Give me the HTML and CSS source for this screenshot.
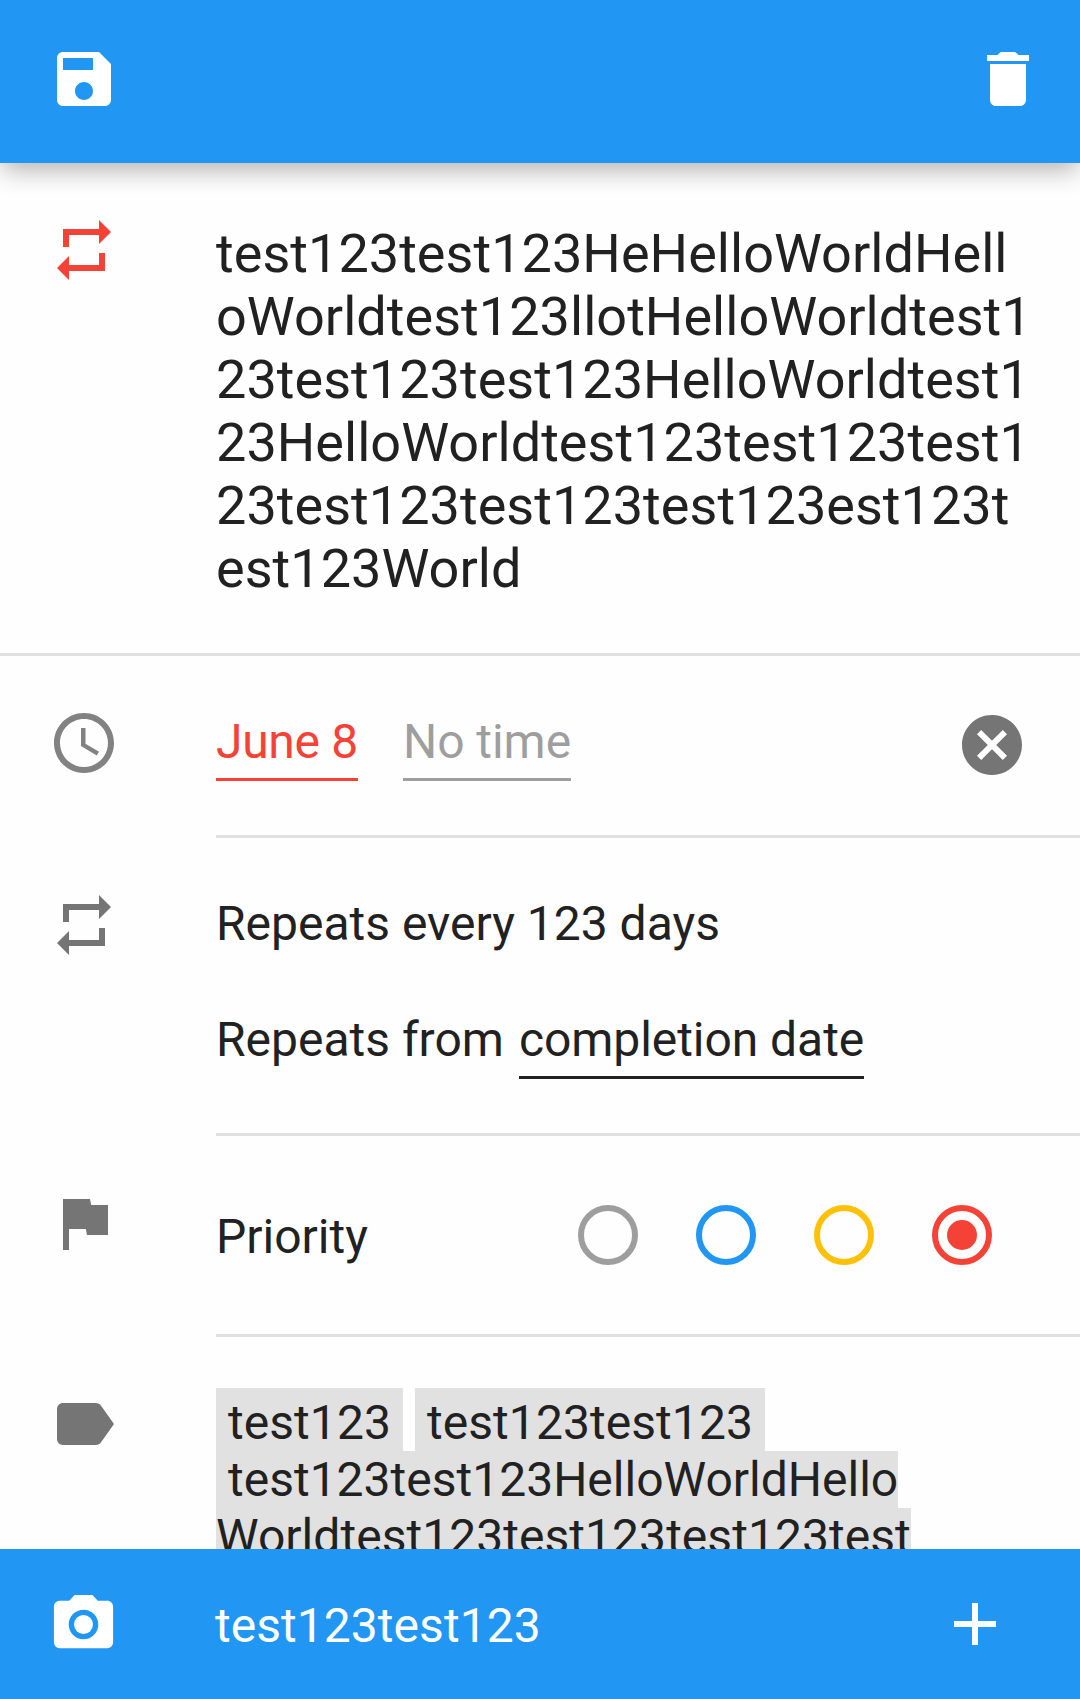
FILE: index.html
```html
<!DOCTYPE html>
<html lang="en">
<head>
<meta charset="utf-8">
<title>Edit task</title>
<link rel="stylesheet" href="styles.css">
</head>
<body>
<div class="screen">
  <header class="toolbar">
    <svg class="icon" viewBox="0 0 24 24"><path d="M17 3H5c-1.11 0-2 .9-2 2v14c0 1.1.89 2 2 2h14c1.1 0 2-.9 2-2V7l-4-4zm-5 16c-1.66 0-3-1.34-3-3s1.34-3 3-3 3 1.34 3 3-1.34 3-3 3zm3-10H5V5h10v4z"/></svg>
    <svg class="icon" viewBox="0 0 24 24"><path d="M6 19c0 1.100.9 2 2 2h8c1.100 0 2-.9 2-2V7H6v12zM19 4h-3.500l-.4-.45c-.4-.4-.8-.55-1.200-.55h-3.800c-.4 0-.8.15-1.200.55L8.500 4H5v2h14V4z"/></svg>
  </header>

  <main class="content">
    <section class="row row-title">
      <svg class="icon icon-repeat red" viewBox="0 0 24 24"><path d="M7 7h10v3l4-4-4-4v3H5v6h2V7zm10 10H7v-3l-4 4 4 4v-3h12v-6h-2v4z"/></svg>
      <h1 class="title">test123test123HeHelloWorldHell<br>oWorldtest123llotHelloWorldtest1<br>23test123test123HelloWorldtest1<br>23HelloWorldtest123test123test1<br>23test123test123test123est123t<br>est123World</h1>
    </section>

    <section class="row row-date">
      <svg class="icon icon-clock" viewBox="0 0 24 24"><path d="M11.990 2C6.470 2 2 6.480 2 12s4.470 10 9.990 10C17.520 22 22 17.520 22 12S17.520 2 11.990 2zM12 20c-4.420 0-8-3.580-8-8s3.580-8 8-8 8 3.580 8 8-3.580 8-8 8zM12.500 7H11v6l5.250 3.150.75-1.230-4.500-2.670z"/></svg>
      <div class="body date-body">
        <span class="field red">June 8</span>
        <span class="field muted">No time</span>
        <svg class="icon clear" viewBox="0 0 24 24"><path d="M12 2C6.470 2 2 6.470 2 12s4.470 10 10 10 10-4.470 10-10S17.530 2 12 2zm5 13.590L15.590 17 12 13.410 8.410 17 7 15.590 10.590 12 7 8.410 8.410 7 12 10.590 15.590 7 17 8.410 13.410 12 17 15.590z"/></svg>
      </div>
    </section>

    <section class="row row-repeat">
      <svg class="icon" viewBox="0 0 24 24"><path d="M7 7h10v3l4-4-4-4v3H5v6h2V7zm10 10H7v-3l-4 4 4 4v-3h12v-6h-2v4z"/></svg>
      <div class="body repeat-body">
        <div>Repeats every 123 days</div>
        <div class="repeat-from"><span>Repeats from</span><span class="field">completion date</span></div>
      </div>
    </section>

    <section class="row row-priority">
      <svg class="icon" viewBox="0 0 24 24"><path d="M14.400 6L14 4H5v17h2v-7h5.600l.4 2h7V6z"/></svg>
      <div class="body priority-body">
        <span class="priority-label">Priority</span>
        <div class="radios">
          <span class="radio none"></span>
          <span class="radio low"></span>
          <span class="radio medium"></span>
          <span class="radio high selected"></span>
        </div>
      </div>
    </section>

    <section class="row row-tags">
      <svg class="icon" viewBox="0 0 24 24"><path d="M17.630 5.840C17.270 5.330 16.670 5 16 5L5 5.010C3.900 5.010 3 5.900 3 7v10c0 1.100.9 1.990 2 1.990L16 19c.67 0 1.270-.33 1.630-.84L22 12l-4.370-6.160z"/></svg>
      <div class="tags">
        <div class="tag-line"><span class="tag tag-first">test123</span><span class="tag tag-first">test123test123</span></div>
        <div class="tag-line"><span class="tag tag-open">test123test123HelloWorldHello</span></div>
        <div class="tag-line"><span class="tag tag-cont">Worldtest123test123test123test</span></div>
      </div>
    </section>
  </main>

  <footer class="comment-bar">
    <svg class="icon icon-camera" viewBox="0 0 24 24"><circle cx="12" cy="12" r="3.200"/><path d="M9 2L7.170 4H4c-1.100 0-2 .9-2 2v12c0 1.100.9 2 2 2h16c1.100 0 2-.9 2-2V6c0-1.100-.9-2-2-2h-3.170L15 2H9zm3 15c-2.760 0-5-2.240-5-5s2.240-5 5-5 5 2.240 5 5-2.240 5-5 5z"/></svg>
    <span class="comment">test123test123</span>
    <svg class="icon" viewBox="0 0 24 24"><path d="M19 13h-6v6h-2v-6H5v-2h6V5h2v6h6v2z"/></svg>
  </footer>
</div>
</body>
</html>
```

FILE: styles.css
```css
* {
  box-sizing: border-box;
}

body {
  margin: 0;
  background: #fefefe;
  color: #212121;
  font: 48px/57px Roboto, "Liberation Sans", sans-serif;
}

.screen {
  display: flex;
  flex-direction: column;
  width: 1080px;
  height: 1699px;
  overflow: hidden;
}

.icon {
  display: block;
  flex: none;
  width: 72px;
  height: 72px;
  fill: #757575;
}

.toolbar {
  display: flex;
  justify-content: space-between;
  flex: none;
  height: 163px;
  padding: 43px 36px 0 48px;
  background: #2196f3;
  box-shadow: 0 9px 24px -2px rgba(0, 0, 0, 0.3);
}

.toolbar .icon,
.comment-bar .icon {
  fill: #fff;
}

.content {
  flex: 1;
  min-height: 0;
  overflow: hidden;
  /* lets the toolbar shadow fall over the list */
  position: relative;
  z-index: -1;
}

.row {
  display: grid;
  grid-template-columns: 168px 1fr;
  align-items: start;
  padding-left: 48px;
}

.body {
  height: 100%;
  border-bottom: 3px solid #e0e0e0;
}

.row-title {
  height: 493px;
  padding-top: 51px;
  border-bottom: 3px solid #e0e0e0;
}

.title {
  margin: 8px 0 0;
  font-size: 54px;
  font-weight: 400;
  line-height: 63px;
  letter-spacing: 0.04px;
  white-space: nowrap;
}

.icon.red {
  fill: #f44336;
}

.row-date {
  height: 182px;
}

.row-date > .icon {
  margin-top: 51px;
}

.icon-clock {
  opacity: 0.9;
}

.date-body {
  display: flex;
  align-items: flex-start;
  gap: 45px;
  padding: 53px 52px 0 0;
}

.date-body .field {
  margin-top: 4px;
}

.clear {
  margin-left: auto;
}

.field {
  padding-bottom: 8px;
  border-bottom: 3px solid;
  letter-spacing: -0.06px;
  white-space: nowrap;
}

.field.red {
  color: #f44336;
  letter-spacing: -0.3px;
}

.field.muted {
  color: #9e9e9e;
}

.row-repeat {
  height: 298px;
}

.row-repeat > .icon {
  margin-top: 51px;
}

.repeat-body {
  padding-top: 57px;
}

.repeat-from {
  display: flex;
  gap: 15px;
  margin-top: 59px;
}

.row-priority {
  height: 201px;
}

.row-priority > .icon {
  margin-top: 51px;
}

.priority-body {
  display: flex;
  justify-content: space-between;
  align-items: flex-start;
  padding: 69px 88px 0 0;
}

.priority-label {
  margin-top: 3px;
}

.radios {
  display: flex;
  gap: 58px;
}

.radio {
  display: grid;
  place-items: center;
  width: 60px;
  height: 60px;
  border: 6px solid;
  border-radius: 50%;
}

.radio.none { color: #9e9e9e; }
.radio.low { color: #2196f3; }
.radio.medium { color: #ffc107; }
.radio.high { color: #f44336; }

.radio.selected::after {
  content: "";
  width: 30px;
  height: 30px;
  border-radius: 50%;
  background: currentColor;
}

.row-tags {
  padding-top: 51px;
}

.tag-line {
  display: flex;
  gap: 12px;
}

.tag {
  background: #e1e1e1;
  white-space: nowrap;
}

.tag-first {
  padding: 6px 12px 0;
  letter-spacing: 0.06px;
}

.tag-open {
  padding-left: 12px;
}

.tag-cont {
  letter-spacing: 0.04px;
}

.comment-bar {
  display: flex;
  align-items: flex-start;
  flex: none;
  height: 150px;
  padding: 39px 69px 0 48px;
  background: #2196f3;
  color: #fff;
}

.icon-camera {
  width: 71px;
  height: 71px;
  margin: 1px 1px 0 0;
}

.comment {
  flex: 1;
  margin: 9px 0 0 95px;
  letter-spacing: 0.04px;
}
```
